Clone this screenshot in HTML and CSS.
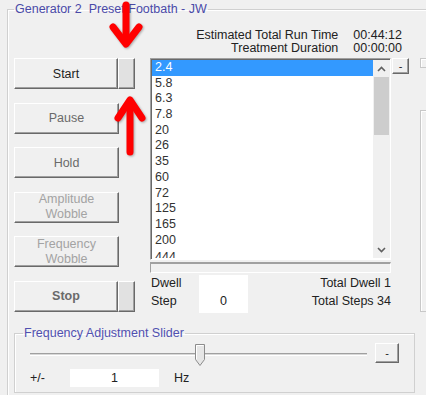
FILE: index.html
```html
<!DOCTYPE html>
<html>
<head>
<meta charset="UTF-8"/>
<title>Generator 2</title>
<link rel="stylesheet" href="styles.css">
</head>
<body>
<fieldset class="gen">
<legend>Generator 2&nbsp; Preset Footbath - JW</legend>

<div class="times">
<span class="lbl">Estimated Total Run Time</span><span>00:44:12</span>
<span class="lbl">Treatment Duration</span><span>00:00:00</span>
</div>

<div class="main">
<div class="buttons">
<div class="btn-row"><div class="btn dark">Start</div><div class="btn side"></div></div>
<div class="btn-row"><div class="btn grey wide">Pause</div></div>
<div class="btn-row"><div class="btn grey wide">Hold</div></div>
<div class="btn-row"><div class="btn off wide two">Amplitude<br>Wobble</div></div>
<div class="btn-row"><div class="btn off wide two">Frequency<br>Wobble</div></div>
<div class="btn-row"><div class="btn grey bold">Stop</div><div class="btn side"></div></div>
</div>

<div class="listcol">
<div class="list">
<div class="items">
<div class="item sel">2.4</div>
<div class="item">5.8</div>
<div class="item">6.3</div>
<div class="item">7.8</div>
<div class="item">20</div>
<div class="item">26</div>
<div class="item">35</div>
<div class="item">60</div>
<div class="item">72</div>
<div class="item">125</div>
<div class="item">165</div>
<div class="item">200</div>
<div class="item">444</div>
</div>
<div class="vscroll">
<div class="arrow"><svg width="9" height="6" viewBox="0 0 9 6"><polyline points="1,5 4.5,1.5 8,5" fill="none" stroke="#606060" stroke-width="1.6"/></svg></div>
<div class="thumb"></div>
<div class="track"></div>
<div class="arrow"><svg width="9" height="6" viewBox="0 0 9 6"><polyline points="1,1 4.5,4.5 8,1" fill="none" stroke="#606060" stroke-width="1.6"/></svg></div>
</div>
</div>
<div class="hbar"></div>
<div class="stats">
<span class="s-lbl">Dwell</span>
<div class="field">0</div>
<span class="s-val">Total Dwell 1</span>
<span class="s-lbl">Step</span>
<span class="s-val">Total Steps 34</span>
</div>
</div>

<div class="btn mini">-</div>

<div class="rightcol">
<div class="panel top"></div>
<div class="panel bottom"></div>
</div>
</div>

<fieldset class="freq">
<legend>Frequency Adjustment Slider</legend>
<div class="slider-row">
<div class="slider">
<div class="rail"></div>
<svg class="knob" width="11" height="23" viewBox="0 0 11 23"><path d="M0.5 0.5 H9.5 V15.5 L5 21.5 L0.5 15.5 Z" fill="#e6e6e6" stroke="#8c8c8c"/><path d="M1.5 15 V1.5 H8.5" fill="none" stroke="#fff"/></svg>
</div>
<div class="btn minus">-</div>
</div>
<div class="input-row">
<span class="pm">+/-</span>
<div class="field wide-field">1</div>
<span class="hz">Hz</span>
</div>
</fieldset>
</fieldset>

<svg class="marks" width="426" height="395" viewBox="0 0 426 395">
<g fill="none" stroke="#ff0000" stroke-width="7" stroke-linecap="round" stroke-linejoin="round">
<line x1="126" y1="5" x2="126" y2="42"/>
<polyline points="113,27 126,44 139,27"/>
<line x1="130" y1="152" x2="130" y2="103"/>
<polyline points="118,118 130,100 142,118"/>
</g>
</svg>
</body>
</html>
```

FILE: styles.css
```css
html, body {
    margin: 0;
    overflow: hidden;
}
body {
    position: relative;
    width: 426px;
    height: 395px;
    background: #f0f0f0;
    font-family: "Liberation Sans", Arial, sans-serif;
    font-size: 12.5px;
    color: #222;
}

fieldset {
    min-width: 0;
    border: 1px solid #d0d0d0;
    box-shadow: inset 1px 1px 0 #fff;
}
legend {
    padding: 0 1px;
    line-height: 14px;
    color: #4a4aa8;
}

.gen {
    margin: 2px 0 0 7px;
    padding: 0 0 40px 6px;
    width: 480px;
}

.times {
    display: grid;
    grid-template-columns: auto auto;
    column-gap: 15px;
    justify-content: end;
    width: 388px;
    margin-top: 13px;
    line-height: 13px;
}
.times .lbl {
    text-align: right;
}

.main {
    display: flex;
    height: 254px;
    margin-top: 3px;
}

/* left column of buttons */
.buttons {
    display: flex;
    flex-direction: column;
    gap: 13.6px;
    width: 121px;
}
.btn-row {
    display: flex;
    height: 31px;
}
.btn {
    box-sizing: border-box;
    display: flex;
    align-items: center;
    justify-content: center;
    text-align: center;
    background: #f0f0f0;
    border: 1px solid;
    border-color: #fff #696969 #696969 #fff;
    box-shadow: inset -1px -1px 0 #a0a0a0;
}
.btn-row .btn {
    width: 104px;
}
.btn-row .wide {
    width: 105px;
}
.btn.side {
    width: 17px;
    background: #e1e1e1;
}
.dark { color: #1e1e1e; }
.grey { color: #6a6a6a; }
.off  { color: #a3a3a3; }
.bold { font-weight: bold; }
.two  { line-height: 15px; }

/* list and stats */
.listcol {
    width: 241px;
    margin-left: 15px;
}
.list {
    box-sizing: border-box;
    display: flex;
    height: 202px;
    padding: 1px 0 1px 1px;
    background: #fff;
    border: 1px solid;
    border-color: #a0a0a0 #fff #fff #a0a0a0;
    box-shadow: inset 1px 1px 0 #696969;
}
.items {
    flex: 1;
    overflow: hidden;
}
.item {
    padding-left: 3px;
    line-height: 15.7px;
    height: 15.7px;
    color: #333;
}
.item.sel {
    background: #3399ff;
    color: #fff;
}
.item:last-child {
    line-height: 19px;
}
.vscroll {
    display: flex;
    flex-direction: column;
    width: 17px;
    background: #f0f0f0;
}
.vscroll .arrow {
    display: flex;
    align-items: center;
    justify-content: center;
    height: 17px;
}
.vscroll .thumb {
    height: 58px;
    margin: 0 1px;
    background: #cdcdcd;
}
.vscroll .track {
    flex: 1;
}
.hbar {
    box-sizing: border-box;
    height: 11px;
    margin-top: 2px;
    border: 1px solid;
    border-top-width: 2px;
    border-color: #a0a0a0 #fff #fff #a0a0a0;
}
.stats {
    display: grid;
    grid-template-columns: 49px 49px 1fr;
    grid-template-rows: 18px 18px;
    margin-top: 1px;
    line-height: 18px;
}
.s-lbl {
    padding-left: 1px;
}
.s-val {
    grid-column: 3;
    text-align: right;
}
.stats .field {
    grid-column: 2;
    grid-row: 1 / 3;
    height: 38px;
    margin-top: 1px;
    padding-bottom: 3px;
    align-items: flex-end;
}
.field {
    box-sizing: border-box;
    display: flex;
    justify-content: center;
    background: #fff;
    line-height: 18px;
}

.btn.mini {
    width: 17px;
    height: 16px;
    margin-left: 1px;
    font-size: 11px;
    line-height: 12px;
}

.rightcol {
    display: flex;
    flex-direction: column;
    gap: 42px;
    margin-left: 11px;
    width: 40px;
}
.panel {
    border: 1px solid #c8c8c8;
    box-shadow: inset 1px 1px 0 #fff;
}
.panel.top { height: 104px; }
.panel.bottom { height: 200px; flex-shrink: 0; }

/* frequency slider group */
.freq {
    box-sizing: border-box;
    width: 401px;
    margin: 14px 0 0 0;
    padding: 0 0 5px 8px;
}
.freq legend {
    color: #5050b0;
}
.slider-row {
    display: flex;
    height: 24px;
    margin-top: 3px;
}
.slider {
    position: relative;
    width: 337px;
    margin-left: 7px;
}
.rail {
    margin-top: 10px;
    height: 1px;
    border-top: 1px solid #a0a0a0;
    border-bottom: 1px solid #fff;
    background: #d8d8d8;
}
.knob {
    position: absolute;
    left: 165px;
    top: 1px;
}
.btn.minus {
    width: 24px;
    height: 20px;
    margin-left: 8px;
    font-size: 11px;
}
.input-row {
    display: flex;
    align-items: center;
    height: 18px;
    margin-top: 2px;
}
.pm {
    width: 40px;
    margin-left: 7px;
}
.wide-field {
    width: 89px;
    height: 18px;
}
.hz {
    margin-left: 15px;
}

.marks {
    position: absolute;
    left: 0;
    top: 0;
    pointer-events: none;
    filter: drop-shadow(1px 1px 1px rgba(0, 0, 0, 0.3));
}
```
